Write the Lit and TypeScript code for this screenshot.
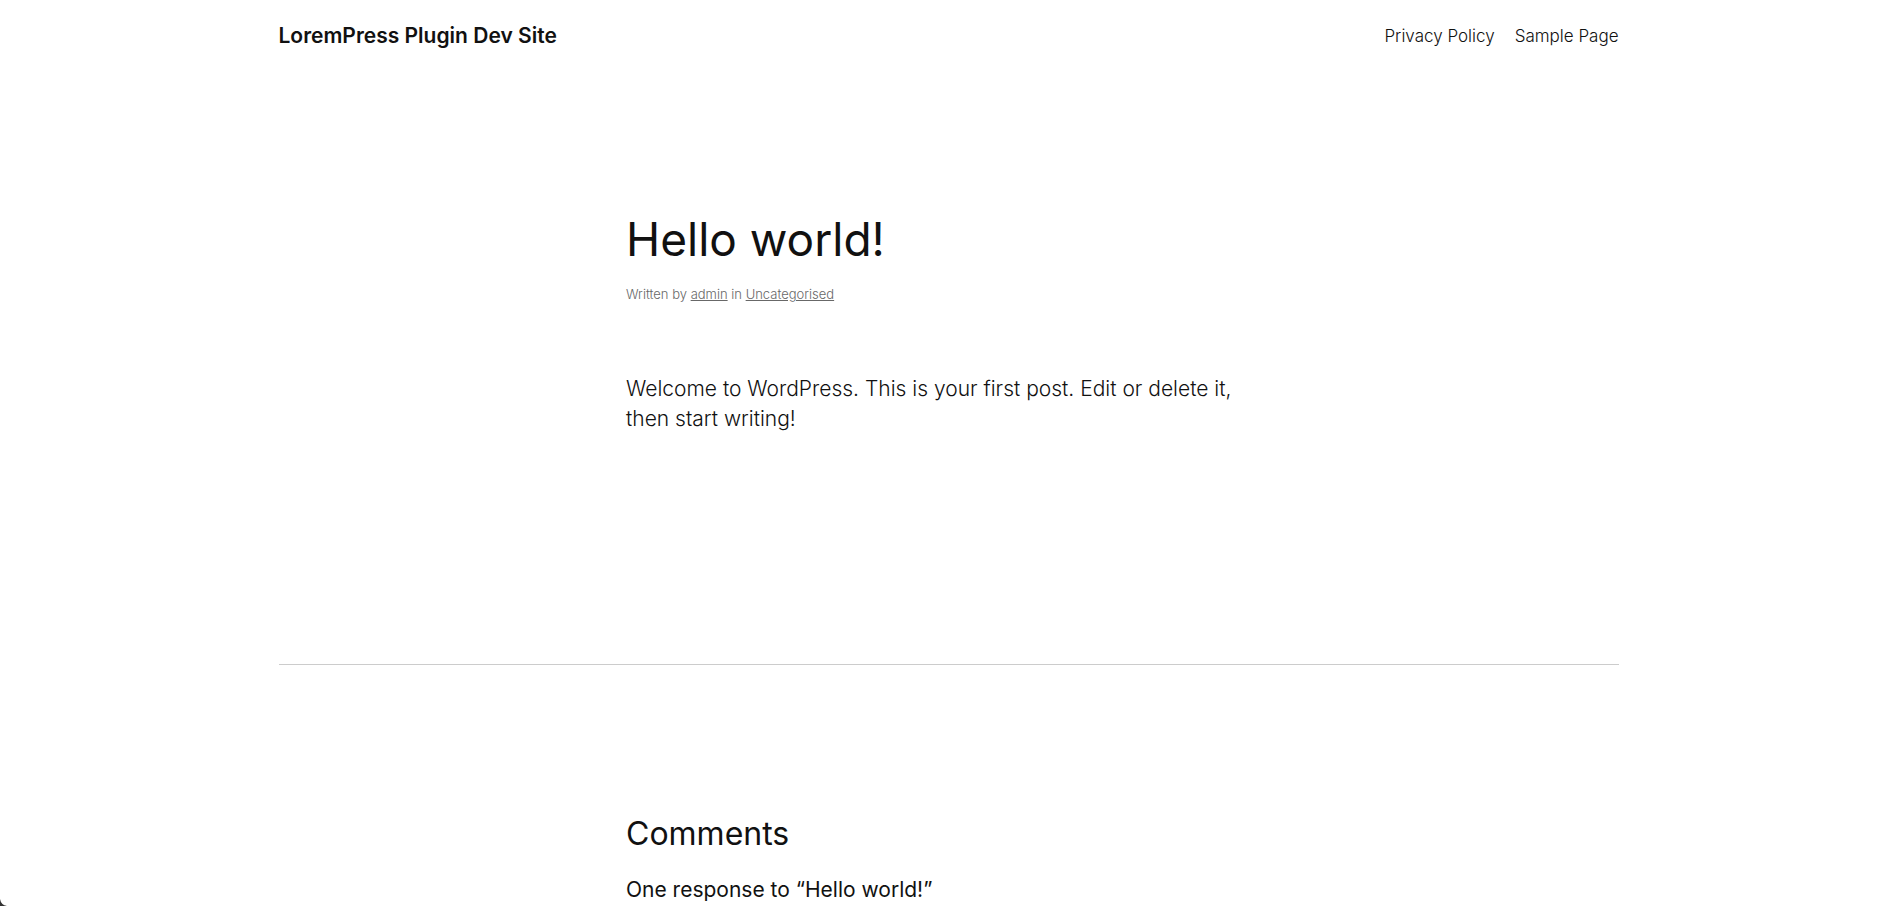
import { LitElement, html, css } from "lit";
import { customElement } from "lit/decorators.js";

@customElement("app-root")
class AppRoot extends LitElement {
  static styles = css`
    :host { display: block; position: relative; height: 100vh; overflow: hidden; background: #fff; color: #111; font-family: Inter, "Liberation Sans", sans-serif; font-weight: 300; }
    * { box-sizing: border-box; }
    a { color: inherit; }
    h1, h2, h3, p { margin: 0; }
    h1, h2, h3 { font-weight: 400; }
    .wide { max-width: 1340px; margin: 0 auto; }
    .narrow { max-width: 645px; margin: 0 auto; }
    .header { display: flex; justify-content: space-between; align-items: center; padding: 20px 0; }
    .brand { font-size: 21px; line-height: 32px; font-weight: 600; text-decoration: none; }
    .nav { display: flex; gap: 20px; font-size: 17px; line-height: 32px; }
    .nav a { text-decoration: none; }
    .post { padding-top: 138px; }
    .title { font-size: 46px; line-height: 58px; }
    .meta { margin-top: 16px; font-size: 13px; line-height: 20px; color: #686868; }
    .body { margin-top: 70px; font-size: 21px; line-height: 30px; }
    .rule { border: 0; border-top: 1px solid #ccc; margin: 230px 0 148px; }
    .comments { font-size: 32px; line-height: 42px; }
    .response { margin-top: 20px; font-size: 21px; line-height: 30px; }
    .corner { position: absolute; left: 0; bottom: 0; width: 7px; height: 7px; display: block; }
  `;
  render() {
    return html`
      <header class="header wide">
        <a class="brand" href="#">LoremPress Plugin Dev Site</a>
        <nav class="nav"><a href="#">Privacy Policy</a><a href="#">Sample Page</a></nav>
      </header>
      <main class="wide">
        <article class="post narrow">
          <h1 class="title">Hello world!</h1>
          <p class="meta">Written by <a href="#">admin</a> in <a href="#">Uncategorised</a></p>
          <p class="body">Welcome to WordPress. This is your first post. Edit or delete it, then start writing!</p>
        </article>
        <hr class="rule" />
        <section class="narrow">
          <h2 class="comments">Comments</h2>
          <h3 class="response">One response to “Hello world!”</h3>
        </section>
      </main>
      <svg class="corner" viewBox="0 0 7 7" aria-hidden="true"><path d="M0 0Q1 6 7 7H0Z" fill="#333" /></svg>
    `;
  }
}
